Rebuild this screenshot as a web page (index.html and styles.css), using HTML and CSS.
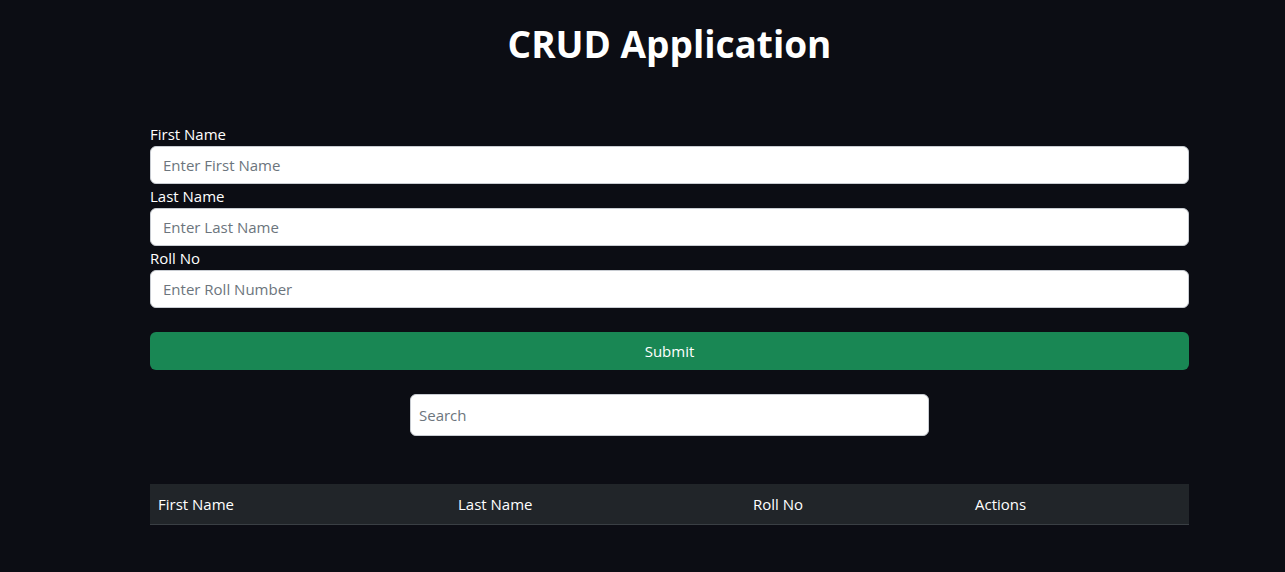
FILE: index.html
```html
<!DOCTYPE html>
<html lang="en">
<head>
<meta charset="utf-8">
<title>CRUD Application</title>
<link rel="stylesheet" href="styles.css">
</head>
<body>
<div class="page">
  <h1 class="title">CRUD Application</h1>
  <form class="form">
    <label class="label" for="fn">First Name</label>
    <input class="input" id="fn" type="text" placeholder="Enter First Name">
    <label class="label" for="ln">Last Name</label>
    <input class="input" id="ln" type="text" placeholder="Enter Last Name">
    <label class="label" for="rn">Roll No</label>
    <input class="input" id="rn" type="text" placeholder="Enter Roll Number">
    <button class="submit" type="button">Submit</button>
  </form>
  <div class="search-row">
    <input class="search" type="text" placeholder="Search">
  </div>
  <table class="table">
    <thead>
      <tr>
        <th class="c1">First Name</th>
        <th class="c2">Last Name</th>
        <th class="c3">Roll No</th>
        <th class="c4">Actions</th>
      </tr>
    </thead>
  </table>
</div>
</body>
</html>
```
FILE: styles.css
```css
html, body {
  margin: 0;
  padding: 0;
  background: #0c0d14;
}
body {
  font-family: "Open Sans", "Noto Sans", sans-serif;
  color: #ffffff;
  font-size: 15px;
  line-height: 24px;
}
.page {
  width: 1039px;
  margin: 0 0 0 150px;
  padding-top: 20px;
  display: flex;
  flex-direction: column;
}
.title {
  margin: 0;
  text-align: center;
  font-size: 37px;
  line-height: 48px;
  font-weight: 700;
  height: 48px;
}
.form {
  margin-top: 54px;
  display: flex;
  flex-direction: column;
}
.label {
  display: block;
  height: 24px;
  font-size: 15px;
  line-height: 24px;
  color: #ffffff;
}
.input {
  box-sizing: border-box;
  height: 38px;
  width: 100%;
  margin: 0;
  border: 1px solid #c8ccd2;
  border-radius: 6px;
  background: #ffffff;
  padding: 0 12px;
  font-family: inherit;
  font-size: 15px;
  color: #212529;
}
.input::placeholder, .search::placeholder {
  color: #6c757d;
}
.submit {
  margin-top: 24px;
  height: 38px;
  border: 0;
  border-radius: 6px;
  background: #198754;
  color: #ffffff;
  font-family: inherit;
  font-size: 15px;
}
.search-row {
  margin-top: 24px;
  display: flex;
  justify-content: center;
}
.search {
  box-sizing: border-box;
  width: 519px;
  height: 42px;
  margin: 0;
  border: 1px solid #c8ccd2;
  border-radius: 6px;
  background: #ffffff;
  padding: 0 8px;
  font-family: inherit;
  font-size: 15px;
  color: #212529;
}
.table {
  margin-top: 48px;
  width: 100%;
  border-collapse: collapse;
}
.table th {
  background: #212529;
  color: #ffffff;
  font-weight: 400;
  text-align: left;
  padding: 8px;
  height: 24px;
  line-height: 24px;
  border-bottom: 1px solid #3a3f44;
}
.c1 { width: 284px; }
.c2 { width: 279px; }
.c3 { width: 206px; }
.c4 { width: auto; }
```
